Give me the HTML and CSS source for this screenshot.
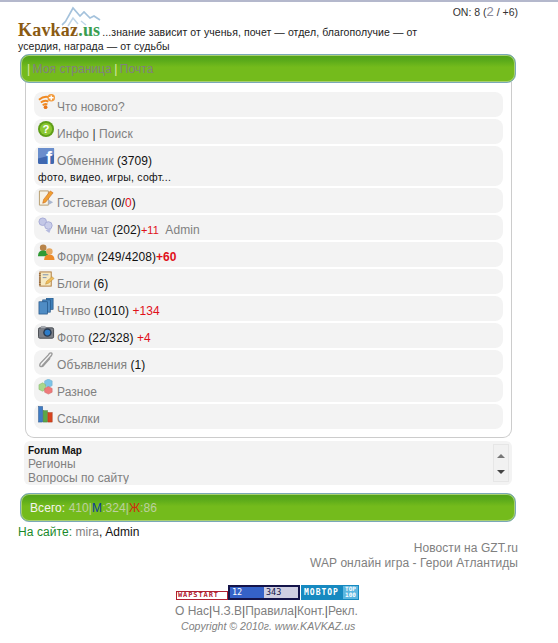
FILE: index.html
```html
<!DOCTYPE html>
<html lang="ru">
<head>
<meta charset="utf-8">
<title>Kavkaz.us</title>
<link rel="stylesheet" href="styles.css">
</head>
<body>
<div class="online">ON: 8 (<span class="big">2</span> / +6)</div>
<div class="head">
  <a class="logo">Kavkaz<span class="dot">.us</span>
    <svg class="peaks" width="42" height="22" viewBox="0 0 42 22"><path d="M1 20 Q5 17 7 12 L12 3 L19 11 L23 7 L29 13 L33 11 L39 15" fill="none" stroke="#a4c2dc" stroke-width="1.700"/><path d="M7 21 L12 13 L17 19 M20 16 L25 20" fill="none" stroke="#c0d6e8" stroke-width="1.500"/></svg>
  </a><span class="motto">...знание зависит от ученья, почет — отдел, благополучие — от усердия, награда — от судьбы</span>
</div>
<div class="bar topbar"><span class="sep">|</span> <span class="dim">Моя страница</span> <span class="sep">|</span> <span class="dim">Почта</span></div>
<div class="panel">
  <div class="row"><svg class="ic" viewBox="0 0 18 18"><path d="M1 6 Q7 1 13 4" fill="none" stroke="#f08a24" stroke-width="2"/><path d="M3 9 Q7 6 11 8" fill="none" stroke="#f08a24" stroke-width="2"/><path d="M5 12 Q7 10 10 11" fill="none" stroke="#f08a24" stroke-width="2"/><circle cx="8" cy="14" r="2" fill="#e8761a"/><circle cx="14" cy="4" r="4" fill="#f29a3c"/><path d="M14 1.500V6.500M11.500 4H16.500" stroke="#fff" stroke-width="1.500"/></svg><span class="lnk">Что нового?</span></div>
  <div class="row"><svg class="ic" viewBox="0 0 18 18"><circle cx="8.500" cy="8.500" r="8.500" fill="#5f9e18"/><circle cx="8.500" cy="8.500" r="6.500" fill="#8cc832"/><text class="q" x="8.500" y="13" text-anchor="middle">?</text></svg><span class="lnk">Инфо</span> <span class="pipe2">|</span> <span class="lnk">Поиск</span></div>
  <div class="row tall"><svg class="ic" viewBox="0 0 18 18"><rect x="0" y="0" width="17" height="17" rx="1.500" fill="#3f68b0"/><path d="M0 0H17V7L0 11Z" fill="#6a8ecc"/><text class="f" x="8.500" y="16.500">f</text></svg><span class="lnk">Обменник</span> (3709)<div class="sub">фото, видео, игры, софт...</div></div>
  <div class="row"><svg class="ic" viewBox="0 0 18 18"><path d="M1.500 1H11V16H1.500Z" fill="#f6f3e6" stroke="#b59a6a"/><path d="M5 14 L6 10 L13 1 L16 3 L8 13Z" fill="#f0a030" stroke="#c8641a" stroke-width=".6"/><path d="M11 10 L16 13 L11 16Z" fill="#a9b6cf"/></svg><span class="lnk">Гостевая</span> (0/<span class="red">0</span>)</div>
  <div class="row"><svg class="ic" viewBox="0 0 18 18"><circle cx="5" cy="5" r="4" fill="#c3c7e6" stroke="#a6aad6"/><circle cx="11" cy="9" r="4" fill="#c9cde9" stroke="#a6aad6"/><path d="M8 14 L14 12 L12 17Z" fill="#b6bbdf"/></svg><span class="lnk">Мини чат</span> (202)<span class="red small">+11</span> <span class="lnk admin">Admin</span></div>
  <div class="row"><svg class="ic" viewBox="0 0 18 18"><circle cx="5.500" cy="4" r="3.500" fill="#b9854a"/><path d="M0 13 Q0 7 5.500 7 Q11 7 11 13Z" fill="#2f9a34"/><circle cx="12" cy="8" r="3.500" fill="#e6a860"/><path d="M6.500 17 Q6.500 11 12 11 Q17.500 11 17.500 17Z" fill="#ec8a28"/></svg><span class="lnk">Форум</span> (249/4208)<b class="red">+60</b></div>
  <div class="row"><svg class="ic" viewBox="0 0 18 18"><rect x="2" y="1" width="12" height="15" fill="#f6e9c2" stroke="#b07a3a"/><path d="M5 4H11M5 7H9" stroke="#7a8fb0"/><path d="M2 2V15" stroke="#8a5a2a" stroke-width="2" stroke-dasharray="1 1"/><path d="M8 14 L9 11 L15 6 L17 8 L11 13Z" fill="#eebc5a" stroke="#b8862c" stroke-width=".5"/></svg><span class="lnk">Блоги</span> (6)</div>
  <div class="row"><svg class="ic" viewBox="0 0 18 18"><rect x="9" y="0" width="7" height="12" fill="#3f7fb8" stroke="#1f4f80" stroke-width=".7"/><rect x="5" y="2" width="8" height="13" fill="#4f8cc4" stroke="#1f4f80" stroke-width=".7"/><rect x="1" y="4" width="9" height="13" fill="#4f8cc4" stroke="#1f4f80" stroke-width=".7"/></svg><span class="lnk">Чтиво</span> (1010) <span class="red">+134</span></div>
  <div class="row"><svg class="ic" viewBox="0 0 18 18"><rect x="0.500" y="3" width="16" height="11" rx="1.500" fill="#7c8088" stroke="#45484e"/><rect x="3" y="1" width="5" height="2.500" fill="#a4a8ae"/><circle cx="10" cy="8" r="4.500" fill="#2a3a50"/><circle cx="10" cy="8" r="3" fill="#2d7cc8"/></svg><span class="lnk">Фото</span> (22/328) <span class="red">+4</span></div>
  <div class="row"><svg class="ic" viewBox="0 0 18 18"><path d="M4 15 L14 4 Q16 1 13.500 1 Q12 1 11 3 L2.500 12 Q1 15 3 15.500 Q5 16 7 13 L13 6.500" fill="none" stroke="#999" stroke-width="1.400"/></svg><span class="lnk">Объявления</span> (1)</div>
  <div class="row"><svg class="ic" viewBox="0 0 18 18"><path d="M7 2 L11 0 L15 2 V7 L11 9 L7 7Z" fill="#7cc4e8" stroke="#6aa8c8" stroke-width=".5"/><path d="M1 6 L5 4 L8 6 V11 L5 13 L1 11Z" fill="#a8d88c" stroke="#7ab060" stroke-width=".5"/><path d="M7 10 L11 8 L15 10 V14 L11 16 L7 14Z" fill="#ee7a7a" stroke="#c86060" stroke-width=".5"/></svg><span class="lnk">Разное</span></div>
  <div class="row"><svg class="ic" viewBox="0 0 18 18"><rect x="0.500" y="0.500" width="4.500" height="16.500" fill="#3f7cc4" stroke="#2a568c" stroke-width=".5"/><rect x="5.500" y="5" width="4.500" height="12" fill="#5aa846" stroke="#3a7a30" stroke-width=".5"/><rect x="10.500" y="7" width="4.500" height="10" fill="#d8441e" stroke="#a03010" stroke-width=".5"/></svg><span class="lnk">Ссылки</span></div>
</div>
<div class="map">
  <div class="map-list">
    <div class="map-title">Forum Map</div>
    <div class="lnk">Регионы</div>
    <div class="lnk">Вопросы по сайту</div>
  </div>
  <div class="scroll"><span class="up"></span><span class="down"></span></div>
</div>
<div class="bar lowbar">Всего: <span class="pale">410</span><span class="pale">|</span><span class="m">М</span><span class="pale">:324|</span><span class="w">Ж</span><span class="pale">:86</span></div>
<div class="now"><span class="green">На сайте:</span> <span class="lnk">mira</span>, Admin</div>
<div class="links">
  <div class="lnk">Новости на GZT.ru</div>
  <div class="lnk">WAP онлайн игра - Герои Атлантиды</div>
</div>
<div class="counters">
  <span class="wap">WAPSTART</span><span class="cnt"><span class="cnt-a">12</span><span class="cnt-b">343</span></span><span class="mob"><span class="mob-name">MOBTOP</span><span class="mob-top">TOP<br>100</span></span>
</div>
<div class="foot lnk">О Нас<i class="pipe">|</i>Ч.З.В<i class="pipe">|</i>Правила<i class="pipe">|</i>Конт.<i class="pipe">|</i>Рекл.</div>
<div class="copy">Copyright © 2010г. www.KAVKAZ.us</div>
</body>
</html>
```
FILE: styles.css
```css
* { box-sizing: border-box; }
html, body { margin: 0; padding: 0; background: #fff; }
body {
  width: 558px;
  height: 643px;
  overflow: hidden;
  border-top: 2px solid #b4b8cc;
  font: 12px/14px "Liberation Sans", Arial, sans-serif;
  letter-spacing: .07px;
  color: #111;
}
.lnk { color: #808080; }
.red { color: #e0101a; }
.small { font-size: 11px; }
.pipe2 { color: #333; }
.online {
  height: 18px;
  padding: 3px 40px 0 0;
  text-align: right;
  font-size: 10.500px;
  line-height: 13px;
  letter-spacing: 0;
  color: #333;
}
.big { font-size: 13px; color: #8a8a9a; }
.head {
  height: 32px;
  padding: 3px 0 0 18px;
  width: 425px;
  font-size: 10.500px;
  line-height: 14px;
  letter-spacing: .08px;
  color: #222;
}
.logo {
  position: relative;
  display: inline-block;
  height: 14px;
  font: bold 18px/14px "Liberation Serif", serif;
  color: #8a5a12;
  letter-spacing: .2px;
  margin-right: 2px;
}
.dot { color: #3a9e50; }
.peaks { position: absolute; left: 43px; top: -18px; }
.bar {
  height: 29px;
  margin: 0 42px 0 20px;
  padding: 0 11px;
  border: 1px solid #7aa8b8;
  border-radius: 9px;
  background: linear-gradient(#4fa01a 0, #5aaa1a 20%, #74bb1c 45%, #74bb1c 100%);
  box-shadow: inset 0 0 0 1px #a8d070;
  color: #f4f4e8;
  font-size: 12px;
  line-height: 28px;
}
.topbar { padding-left: 6px; margin-top: 2px; word-spacing: -1px; }
.sep { color: #dce8a8; }
.dim { color: #808080; word-spacing: 0; }
.panel {
  width: 487px;
  height: 356px;
  margin: -1px 0 0 25px;
  padding: 10px 8px 0;
  border: 1px solid #ccc;
  border-top: 0;
  border-radius: 0 0 9px 9px;
  display: flex;
  flex-direction: column;
  gap: 2px;
}
.row {
  flex: none;
  height: 25px;
  padding: 2px 0 0 4px;
  background: #f3f3f3;
  border-radius: 8px;
  line-height: 14px;
  white-space: nowrap;
}
.tall { height: 40px; }
.ic { display: inline-block; width: 17px; height: 17px; margin-right: 2px; vertical-align: baseline; }
.sub { font-size: 10.500px; line-height: 11px; margin-top: 4px; letter-spacing: .25px; color: #111; }
.admin { margin-left: 3px; }
.q { font: bold 12px "Liberation Sans", sans-serif; fill: #fff; }
.f { font: bold 19px "Liberation Sans", sans-serif; fill: #fff; }
.map {
  width: 488px;
  height: 44px;
  margin: 3px 0 0 24px;
  padding: 4px 3px 0 4px;
  background: #f3f3f3;
  border-radius: 6px;
  display: flex;
  justify-content: space-between;
}
.map-list { height: 39px; overflow: hidden; line-height: 14px; }
.map-title { font-size: 10px; font-weight: bold; line-height: 12px; letter-spacing: 0; color: #111; }
.scroll {
  width: 16px;
  height: 38px;
  margin-top: -1px;
  background: #f1f1f1;
  border: 1px solid #e6e6e6;
  display: flex;
  flex-direction: column;
  align-items: center;
  justify-content: space-between;
  padding: 9px 0 7px;
}
.up { border: 4px solid transparent; border-top: 0; border-bottom: 4px solid #777; }
.down { border: 4px solid transparent; border-bottom: 0; border-top: 4px solid #444; }
.lowbar { margin-top: 8px; padding-left: 9px; color: #f4f4f0; }
.pale { color: #bcd0a0; }
.m { color: #0d3a9e; }
.w { color: #d02a10; }
.now { margin: 3px 0 0 18px; line-height: 14px; }
.green { color: #1a8a2a; }
.links { margin: 2px 40px 0 0; text-align: right; line-height: 15px; }
.counters {
  display: flex;
  align-items: flex-end;
  height: 15px;
  margin: 14px 0 0 176px;
  font: 8px/9px "DejaVu Sans Mono", monospace;
  letter-spacing: 0;
}
.wap {
  width: 52px;
  height: 9px;
  border: 1px solid #b02030;
  color: #b02030;
  background: #fff;
  font-size: 7px;
  font-weight: bold;
  line-height: 7px;
  padding-left: 1px;
  letter-spacing: .9px;
  white-space: nowrap;
  overflow: hidden;
}
.cnt {
  width: 72px;
  height: 15px;
  border: 2px solid #14144a;
  display: flex;
  font-size: 8.500px;
  line-height: 11px;
}
.cnt-a { width: 34px; background: #3562c8; color: #fff; padding-left: 2px; }
.cnt-b { flex: 1; background: #cfcfe2; color: #14144a; padding-left: 2px; }
.mob {
  width: 58px;
  height: 15px;
  margin-left: 1px;
  background: #1689c0;
  color: #fff;
  display: flex;
  align-items: center;
  justify-content: space-between;
  padding: 1px;
}
.mob-name { font-size: 8px; font-weight: bold; letter-spacing: 1px; padding-left: 2px; }
.mob-top {
  width: 15px;
  height: 13px;
  background: #5cb6e0;
  font-size: 6px;
  font-weight: bold;
  line-height: 6px;
  text-align: center;
}
.foot { margin-top: 4px; padding-left: 175px; line-height: 15px; letter-spacing: 0; }
.pipe { font-style: normal; color: #555; }
.copy {
  margin-top: 1px;
  padding-left: 181px;
  font-size: 10.500px;
  line-height: 12px;
  font-style: italic;
  letter-spacing: .05px;
  color: #808080;
}
```
